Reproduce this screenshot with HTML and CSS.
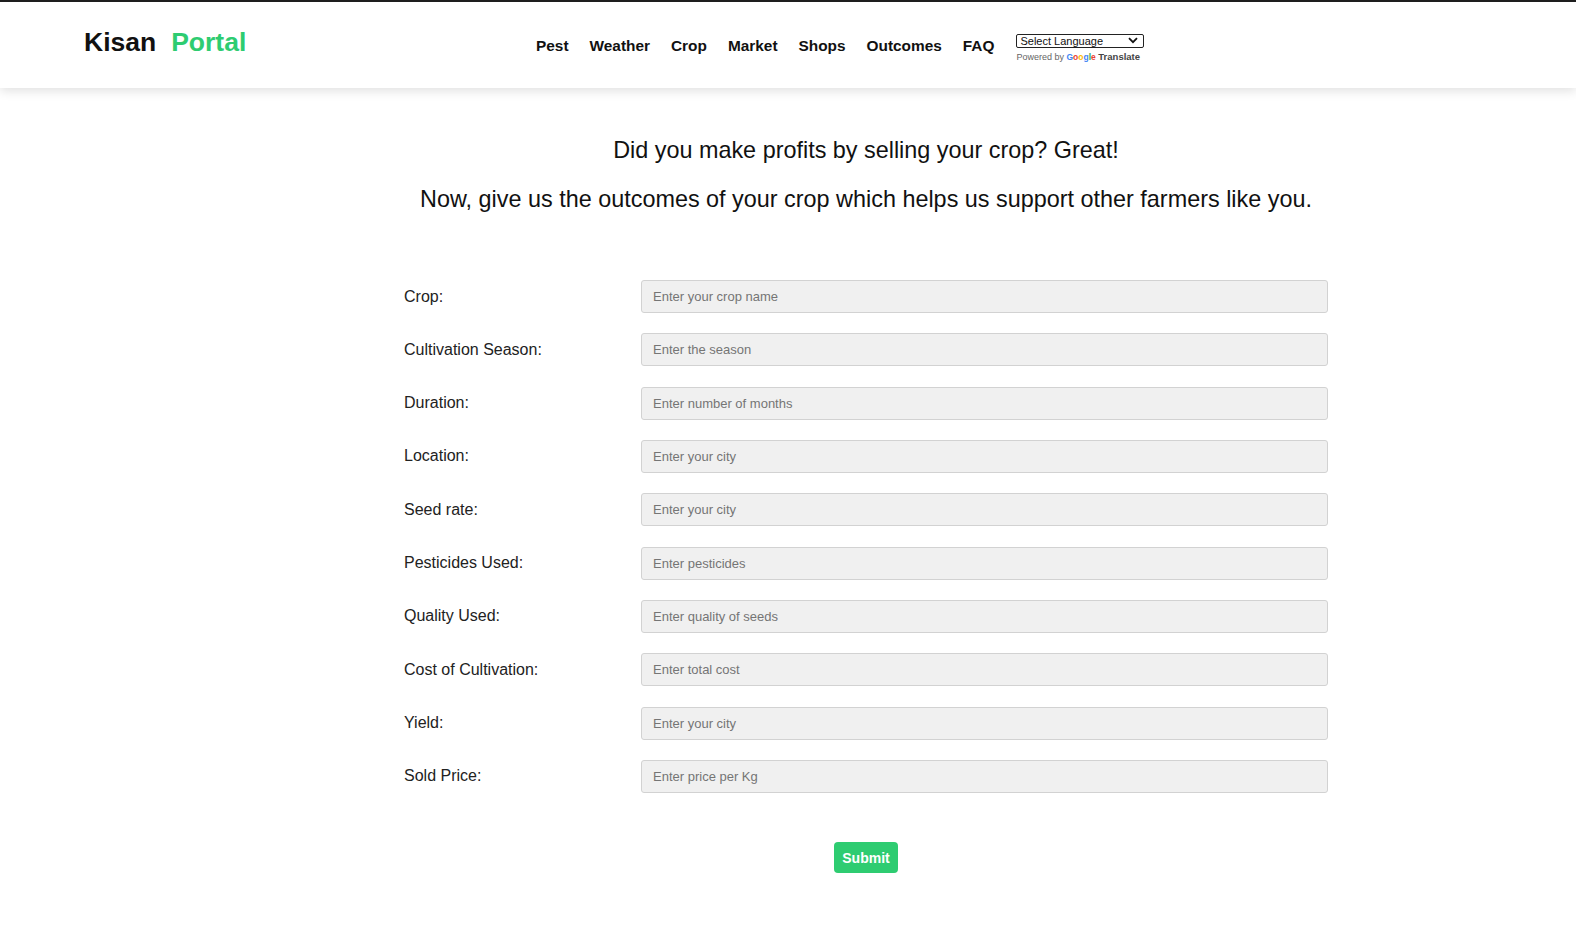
FILE: index.html
```html
<!DOCTYPE html>
<html lang="en">
<head>
<meta charset="utf-8">
<title>Kisan Portal - Outcomes</title>
<link rel="stylesheet" href="styles.css">
</head>
<body>
<header class="topbar">
  <div class="logo"><span class="logo-a">Kisan</span><span class="logo-b">Portal</span></div>
  <nav class="nav">
    <a href="#">Pest</a>
    <a href="#">Weather</a>
    <a href="#">Crop</a>
    <a href="#">Market</a>
    <a href="#">Shops</a>
    <a href="#">Outcomes</a>
    <a href="#">FAQ</a>
  </nav>
  <div class="translate">
    <div class="lang-select">
      <span>Select Language</span>
      <svg class="chev" width="10" height="7" viewBox="0 0 10 7"><path d="M1 1.2 L5 5.2 L9 1.2" fill="none" stroke="#111" stroke-width="1.8"/></svg>
    </div>
    <div class="powered">Powered by <span class="g"><span class="gb">G</span><span class="gr">o</span><span class="gy">o</span><span class="gb">g</span><span class="gg">l</span><span class="gr">e</span></span> <b>Translate</b></div>
  </div>
</header>

<main class="content">
  <div class="intro">
    <p>Did you make profits by selling your crop? Great!</p>
    <p>Now, give us the outcomes of your crop which helps us support other farmers like you.</p>
  </div>

  <form class="form">
    <div class="row"><label>Crop:</label><input type="text" placeholder="Enter your crop name"></div>
    <div class="row"><label>Cultivation Season:</label><input type="text" placeholder="Enter the season"></div>
    <div class="row"><label>Duration:</label><input type="text" placeholder="Enter number of months"></div>
    <div class="row"><label>Location:</label><input type="text" placeholder="Enter your city"></div>
    <div class="row"><label>Seed rate:</label><input type="text" placeholder="Enter your city"></div>
    <div class="row"><label>Pesticides Used:</label><input type="text" placeholder="Enter pesticides"></div>
    <div class="row"><label>Quality Used:</label><input type="text" placeholder="Enter quality of seeds"></div>
    <div class="row"><label>Cost of Cultivation:</label><input type="text" placeholder="Enter total cost"></div>
    <div class="row"><label>Yield:</label><input type="text" placeholder="Enter your city"></div>
    <div class="row"><label>Sold Price:</label><input type="text" placeholder="Enter price per Kg"></div>
    <div class="actions"><button type="button" class="submit">Submit</button></div>
  </form>
</main>
</body>
</html>
```

FILE: styles.css
```css
* { box-sizing: border-box; }
html, body { margin: 0; padding: 0; background: #fff; }
body {
  font-family: "Liberation Sans", Arial, sans-serif;
  color: #111;
}

.topbar {
  height: 88px;
  border-top: 2px solid #1e1e1e;
  display: flex;
  align-items: center;
  padding-left: 84px;
  background: #fff;
  box-shadow: 0 3px 10px rgba(0, 0, 0, 0.12);
  position: relative;
}

.logo {
  width: 452px;
  font-weight: bold;
  font-size: 26.5px;
  margin-top: -6px;
}
.logo-a { color: #111; }
.logo-b { color: #2ecc71; margin-left: 15px; }

.nav {
  display: flex;
  gap: 21px;
  margin-top: 1px;
}
.nav a {
  color: #111;
  text-decoration: none;
  font-weight: bold;
  font-size: 15.4px;
}

.translate {
  margin-left: 22px;
  margin-top: 5px;
  display: flex;
  flex-direction: column;
  gap: 3px;
}
.lang-select {
  width: 128px;
  height: 14px;
  border: 1px solid #222;
  border-radius: 2px;
  font-size: 11px;
  line-height: 12px;
  padding-left: 3px;
  padding-right: 5px;
  display: flex;
  align-items: center;
  justify-content: space-between;
  color: #111;
}
.chev { display: block; }
.powered {
  font-size: 9px;
  color: #666;
  white-space: nowrap;
}
.powered b { color: #444; font-size: 9.5px; }
.g { font-weight: bold; font-size: 8.5px; }
.gb { color: #4285f4; }
.gr { color: #ea4335; }
.gy { color: #fbbc05; }
.gg { color: #34a853; }

.content {
  margin-left: 404px;
  width: 924px;
}

.intro {
  margin-top: 48px;
  text-align: center;
  font-size: 23.4px;
  color: #111;
}
.intro p {
  margin: 0 0 21px 0;
  line-height: 28px;
}

.form {
  margin-top: 67px;
  display: flex;
  flex-direction: column;
  gap: 20.33px;
}
.row {
  display: flex;
  align-items: center;
  height: 33px;
}
.row label {
  width: 237px;
  font-size: 16px;
  color: #222;
}
.row input {
  flex: 1;
  height: 33px;
  background: #f0f0f0;
  border: 1px solid #d2d2d2;
  border-radius: 3px;
  padding: 0 11px;
  font-family: "Liberation Sans", Arial, sans-serif;
  font-size: 13px;
  color: #333;
  outline: none;
}
.row input::placeholder { color: #757575; }

.actions {
  display: flex;
  justify-content: center;
  margin-top: 29px;
}
.submit {
  width: 64px;
  height: 31px;
  background: #2ecc71;
  color: #fff;
  border: none;
  border-radius: 4px;
  font-family: "Liberation Sans", Arial, sans-serif;
  font-size: 14px;
  font-weight: bold;
  padding: 0;
}
```
